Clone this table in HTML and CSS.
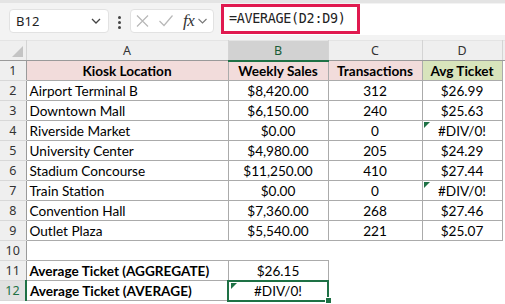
FILE: index.html
```html
<!DOCTYPE html>
<html>
<head>
<meta charset="utf-8">
<link rel="stylesheet" href="styles.css">
</head>
<body>
<div class="app">
  <div class="toolbar">
    <div class="namebox">
      <span class="name">B12</span>
      <svg class="chev" width="10" height="6" viewBox="0 0 10 6"><path d="M1 1 L5 5 L9 1" fill="none" stroke="#444" stroke-width="1.3"/></svg>
    </div>
    <div class="vdots"><span></span><span></span><span></span></div>
    <div class="fxbox">
      <svg width="14" height="12" viewBox="0 0 14 12"><path d="M1 0.5 L12 11.5 M12 0.5 L1 11.5" stroke="#b8b8b8" stroke-width="1.2" fill="none"/></svg>
      <svg width="14" height="12" viewBox="0 0 14 12"><path d="M0.5 6 L5 10.5 L13.5 0.5" stroke="#b8b8b8" stroke-width="1.2" fill="none"/></svg>
      <span class="fx">fx</span>
      <svg width="9" height="6" viewBox="0 0 9 6"><path d="M0.5 1 L4.5 5 L8.5 1" fill="none" stroke="#777" stroke-width="1.1"/></svg>
    </div>
    <div class="formula">
      <div class="hl">=AVERAGE(D2:D9)</div>
    </div>
  </div>
  <table class="sheet">
    <colgroup>
      <col class="c-rh"><col class="c-a"><col class="c-b"><col class="c-c"><col class="c-d"><col class="c-e">
    </colgroup>
    <tr class="colhdr">
      <th class="corner"><span class="tri"></span></th>
      <th>A</th><th class="selcol">B</th><th>C</th><th>D</th><th class="last"></th>
    </tr>
    <tr>
      <th class="rh">1</th>
      <td class="g hd pink">Kiosk Location</td><td class="g hd pink">Weekly Sales</td><td class="g hd pink">Transactions</td><td class="g hd green">Avg Ticket</td><td></td>
    </tr>
    <tr><th class="rh">2</th><td class="g l">Airport Terminal B</td><td class="g">$8,420.00</td><td class="g">312</td><td class="g">$26.99</td><td></td></tr>
    <tr><th class="rh">3</th><td class="g l">Downtown Mall</td><td class="g">$6,150.00</td><td class="g">240</td><td class="g">$25.63</td><td></td></tr>
    <tr><th class="rh">4</th><td class="g l">Riverside Market</td><td class="g">$0.00</td><td class="g">0</td><td class="g err">#DIV/0!<span class="flag"></span></td><td></td></tr>
    <tr><th class="rh">5</th><td class="g l">University Center</td><td class="g">$4,980.00</td><td class="g">205</td><td class="g">$24.29</td><td></td></tr>
    <tr><th class="rh">6</th><td class="g l">Stadium Concourse</td><td class="g">$11,250.00</td><td class="g">410</td><td class="g">$27.44</td><td></td></tr>
    <tr><th class="rh">7</th><td class="g l">Train Station</td><td class="g">$0.00</td><td class="g">0</td><td class="g err">#DIV/0!<span class="flag"></span></td><td></td></tr>
    <tr><th class="rh">8</th><td class="g l">Convention Hall</td><td class="g">$7,360.00</td><td class="g">268</td><td class="g">$27.46</td><td></td></tr>
    <tr><th class="rh">9</th><td class="g l">Outlet Plaza</td><td class="g">$5,540.00</td><td class="g">221</td><td class="g">$25.07</td><td></td></tr>
    <tr><th class="rh">10</th><td></td><td></td><td></td><td></td><td></td></tr>
    <tr><th class="rh">11</th><td class="g l b">Average Ticket (AGGREGATE)</td><td class="g">$26.15</td><td></td><td></td><td></td></tr>
    <tr><th class="rh selrow">12</th><td class="g l b">Average Ticket (AVERAGE)</td><td class="g sel err">#DIV/0!<span class="flag"></span><span class="handle"></span></td><td></td><td></td><td></td></tr>
  </table>
</div>
</body>
</html>
```

FILE: styles.css
```css
html, body {
  margin: 0;
  padding: 0;
  background: #ffffff;
}
.app {
  width: 505px;
  height: 304px;
  overflow: hidden;
  position: relative;
}
.toolbar {
  height: 37px;
  background: #f3f3f3;
  border-top: 3px solid #e4e4e4;
  display: flex;
  align-items: flex-start;
  position: relative;
}
.namebox {
  margin: 6px 0 0 9px;
  background: #fff;
  border: 1px solid #e2e2e2;
  border-radius: 4px;
  display: flex;
  align-items: center;
  justify-content: space-between;
  padding: 0 7px 0 6px;
  box-sizing: border-box;
  width: 100px;
  height: 24px;
}
.name {
  font-family: "Noto Sans", sans-serif;
  font-size: 13px;
  color: #222;
}
.vdots {
  margin: 13px 0 0 9px;
  display: flex;
  flex-direction: column;
  gap: 2px;
}
.vdots span {
  width: 3px;
  height: 3px;
  background: #444;
  border-radius: 50%;
}
.fxbox {
  margin: 6px 0 0 9px;
  width: 84px;
  height: 24px;
  box-sizing: border-box;
  background: #fff;
  border: 1px solid #e2e2e2;
  border-radius: 4px;
  display: flex;
  align-items: center;
  padding: 0 0 0 5px;
  gap: 9px;
}
.fx {
  font-family: "Liberation Serif", serif;
  font-style: italic;
  font-size: 17px;
  color: #333;
  margin-left: 1px;
  margin-right: -5px;
  letter-spacing: -0.5px;
}
.formula {
  margin: 1px 0 0 7px;
  flex: 1;
  height: 31px;
  background: #fff;
}
.hl {
  width: 139px;
  height: 30px;
  box-sizing: border-box;
  border: 3px solid #e0194f;
  font-family: "DejaVu Sans Mono", monospace;
  font-size: 13.4px;
  color: #222;
  line-height: 24px;
  padding-left: 5px;
  letter-spacing: -0.3px;
}
.sheet {
  border-collapse: collapse;
  table-layout: fixed;
  width: 510px;
  font-family: "Lato", "Liberation Sans", sans-serif;
  font-size: 13.6px;
  color: #000;
}
.c-rh { width: 26px; }
.c-a { width: 202px; }
.c-b { width: 100px; }
.c-c { width: 94px; }
.c-d { width: 80px; }
.c-e { width: 8px; }
.sheet tr { height: 20px; }
.sheet td, .sheet th {
  padding: 0;
  height: 20px;
  white-space: nowrap;
  overflow: hidden;
  box-sizing: border-box;
  text-align: center;
}
.colhdr th {
  background: #efefef;
  font-weight: normal;
  font-family: "Noto Sans", sans-serif;
  font-size: 12.5px;
  color: #333;
  border-right: 1px solid #d4d4d4;
  border-bottom: 1px solid #9a9a9a;
  border-top: 1px solid #e4e4e4;
}
.colhdr th.selcol {
  background: #d2d2d2;
  color: #185c37;
  border-bottom: 2px solid #1e7145;
}
.corner { position: relative; }
.tri {
  position: absolute;
  right: 3px;
  bottom: 3px;
  width: 0;
  height: 0;
  border-left: 11px solid transparent;
  border-bottom: 11px solid #c4c4c4;
}
.sheet th.rh {
  background: #efefef;
  font-weight: normal;
  font-family: "Noto Sans", sans-serif;
  font-size: 12.5px;
  color: #333;
  border-right: 1px solid #9a9a9a;
  border-bottom: 1px solid #d8d8d8;
}
.sheet th.rh.selrow {
  background: #e1e1e1;
  color: #1e7145;
  border-right: 2px solid #1e7145;
}
.sheet td.g {
  border: 1px solid #ababab;
  position: relative;
}
.sheet td.l { text-align: left; padding-left: 3px; }
.sheet td.b { font-weight: bold; }
.sheet td.hd { font-weight: bold; }
.sheet td.pink { background: #f2dcdb; }
.sheet td.green { background: #d8e4bc; }
.flag {
  position: absolute;
  left: 1px;
  top: 1px;
  width: 0;
  height: 0;
  border-top: 6px solid #1e7145;
  border-right: 6px solid transparent;
}
.sheet td.sel {
  outline: 2px solid #1e7145;
  outline-offset: -1px;
  overflow: visible;
}
.sel .flag { left: 2px; top: 2px; }
.handle {
  position: absolute;
  right: -4px;
  bottom: -4px;
  width: 5px;
  height: 5px;
  background: #1e7145;
  border: 1px solid #fff;
}
```
